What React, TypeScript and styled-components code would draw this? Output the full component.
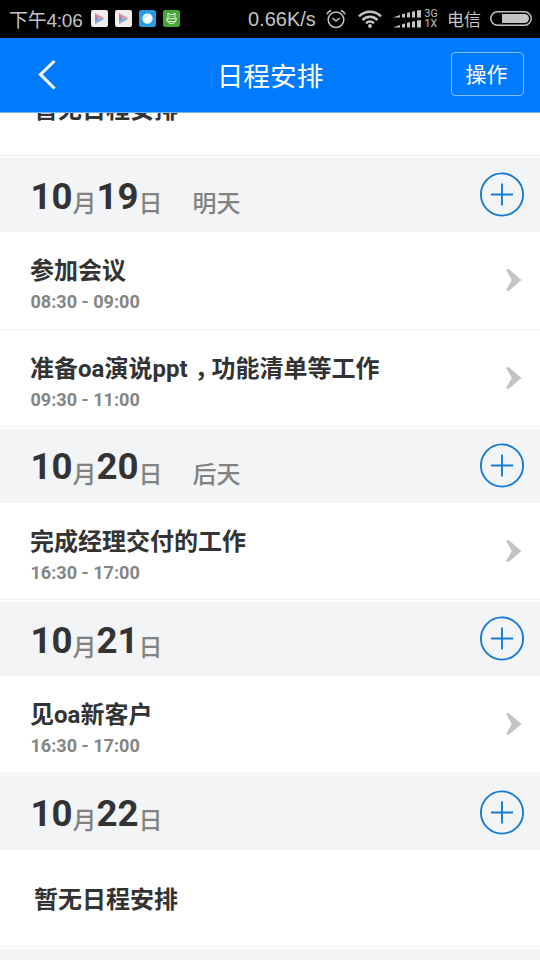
import React from "react";
import styled, { createGlobalStyle } from "styled-components";

const GlobalStyle = createGlobalStyle`
  html, body { margin: 0; height: 100%; overflow: hidden; background: #fff; }
  *, *::before, *::after { box-sizing: border-box; }
  body { font-family: Roboto, "Noto Sans CJK SC", sans-serif; color: #333; }
  svg { display: block; flex: none; }
`;

const Screen = styled.div`
  display: flex;
  flex-direction: column;
  width: 540px;
  height: 960px;
  overflow: hidden;
  background: #fff;
`;

const StatusBar = styled.div`
  flex: none;
  display: flex;
  align-items: center;
  justify-content: space-between;
  height: 38px;
  padding: 0 8px 1px 9px;
  background: #000;
  color: #c4c4c4;
  font-size: 19px;
  line-height: 35px;
`;

const StatusGroup = styled.div`
  display: flex;
  align-items: center;
`;

const Clock = styled.span`
  width: 82px;
  padding-top: 3px;
  white-space: nowrap;
  font-size: 19px;
  font-family: "Liberation Sans", "Noto Sans CJK SC", sans-serif;
  letter-spacing: -0.25px;
`;

const AppIcons = styled.div`
  display: flex;
  gap: 7px;
`;

const Speed = styled.span`
  width: 78px;
  padding-top: 2px;
  font-family: "Liberation Sans", sans-serif;
  font-size: 20px;
  white-space: nowrap;
`;

const NetworkType = styled.div`
  display: flex;
  flex-direction: column;
  width: 26.5px;
  padding-left: 4px;
  font-size: 10.5px;
  line-height: 10px;
`;

const Carrier = styled.span`
  width: 43px;
  padding-top: 3px;
  font-size: 17px;
  white-space: nowrap;
`;

const Header = styled.header`
  flex: none;
  display: grid;
  grid-template-columns: 100px 1fr 100px;
  align-items: center;
  height: 75px;
  padding-right: 16px;
  border-bottom: 1px solid #72b4fb;
  background: #007aff;
  color: #fff;
`;

const BackButton = styled.button`
  display: flex;
  width: 60px;
  padding: 0 0 1px 38px;
  border: 0;
  background: none;
`;

const Title = styled.h1`
  margin: 0;
  padding: 3px 0 0 16px;
  text-align: center;
  font-size: 26.7px;
  font-weight: 400;
  line-height: 36px;
`;

const ActionButton = styled.button`
  justify-self: end;
  width: 73px;
  height: 44px;
  margin-top: -2px;
  padding: 2px 2px 0 0;
  border: 1px solid #80bcff;
  border-radius: 4px;
  background: none;
  color: #fff;
  font: 400 21px/40px Roboto, "Noto Sans CJK SC", sans-serif;
`;

const List = styled.main`
  flex: 1;
  min-height: 0;
  overflow: hidden;
`;

const Scrolled = styled.div`
  margin-top: -54.2px;
`;

const DateBar = styled.div`
  display: flex;
  align-items: flex-start;
  justify-content: space-between;
  height: 74.3px;
  margin-top: 1.5px;
  padding: 14.5px 16px 0 30.5px;
  background: #f2f4f6;
`;

const DateText = styled.div`
  display: flex;
  align-items: flex-start;
  white-space: nowrap;
`;

const Digits = styled.span`
  width: 42px;
  padding-top: 2.3px;
  font-size: 36.6px;
  font-weight: 700;
  line-height: 44px;
`;

const Unit = styled.span`
  width: 24px;
  padding-top: 13.4px;
  color: #828282;
  font-size: 24px;
  font-weight: 500;
  line-height: 36px;
`;

const Relative = styled(Unit)`
  width: auto;
  margin-left: 30px;
`;

const AddButton = styled.button`
  display: flex;
  margin: 0;
  padding: 0;
  border: 0;
  background: none;
`;

const Item = styled.div`
  display: flex;
  align-items: center;
  justify-content: space-between;
  height: 97.5px;
  padding: 0 18px 0 30px;
  border-bottom: 1px solid #ededef;
`;

const ItemText = styled.div`
  padding-top: 9px;
`;

const ItemTitle = styled.div`
  font-size: 24px;
  font-weight: 700;
  line-height: 35px;
  white-space: nowrap;
`;

const Comma = styled.span`
  display: inline-block;
  width: 24px;
  text-indent: 7px;
`;

const ItemTime = styled.div`
  padding-left: 0.4px;
  color: #858585;
  font-size: 18.1px;
  font-weight: 700;
  line-height: 26px;
`;

const EmptyItem = styled(Item)`
  padding-left: 34px;
  padding-top: 6px;
`;

const PlayIcon = () => (
  <svg width="17" height="17" viewBox="0 0 17 17">
    <rect width="17" height="17" rx="2" fill="#f1eeee" />
    <path d="M4 3v11l4-5.5z" fill="#a884c7" />
    <path d="M4 3l10 5.5H8z" fill="#f08b86" />
    <path d="M4 14l10-5.5H8z" fill="#68b5dd" />
  </svg>
);

const BallIcon = () => (
  <svg width="17" height="17" viewBox="0 0 17 17">
    <rect width="17" height="17" rx="2.5" fill="#279be0" />
    <circle cx="8.5" cy="8.5" r="5.2" fill="#d9f0fc" />
    <path d="M4.5 10.5L11.5 5a5 5 0 0 1-7 7z" fill="#fff" />
  </svg>
);

const CatIcon = () => (
  <svg width="17" height="17" viewBox="0 0 17 17" fill="none" stroke="#e4f5dd" strokeWidth="1">
    <rect width="17" height="17" rx="2.5" fill="#45a735" stroke="none" />
    <path d="M5 8.5V3l2 1.5h3L12 3v5.5M3 8.8h11M3.8 9c.2 6.2 9.2 6.2 9.4 0M4.5 11.5h8" />
    <path d="M6.5 6.5h.8M9.7 6.5h.8" />
  </svg>
);

const AlarmIcon = () => (
  <svg width="20" height="20" viewBox="0 0 20 20" fill="none" stroke="#c4c4c4" strokeWidth="1.5">
    <circle cx="10" cy="10.8" r="7.8" />
    <path d="M6.5 9l3.5 3 3.7-3M.8 5.2C1.7 3.3 3.2 1.9 5.2 1.2M19.2 5.2C18.3 3.3 16.8 1.9 14.8 1.2" />
  </svg>
);

const WifiIcon = () => (
  <svg width="24" height="18" viewBox="0 0 24 18" fill="none" stroke="#c4c4c4" strokeWidth="2.5">
    <path d="M1 6.3c6.5-6 15.5-6 22 0M4.5 10c4.5-4.2 10.5-4.2 15 0M8 13.3c2.5-2.2 5.5-2.2 8 0" />
    <circle cx="12" cy="16" r="1.9" fill="#c4c4c4" stroke="none" />
  </svg>
);

const SignalIcon = () => (
  <svg width="28" height="18" viewBox="0 0 28 18" fill="#c4c4c4">
    {[0, 10].map((y) => (
      <g key={y} transform={`translate(0 ${y})`}>
        <path d="M0 7.5L7 5v2.5zM9 4.2l3-.8v4.1H9zM14 2.9l3-.8v5.4h-3zM19 1.7l3-.7v6.5h-3zM24 .5l4-.5v7.5h-4z" />
      </g>
    ))}
  </svg>
);

const BatteryIcon = () => (
  <svg width="42" height="15" viewBox="0 0 42 15">
    <rect x=".8" y=".8" width="40.4" height="13.4" rx="6.7" fill="none" stroke="#c4c4c4" strokeWidth="1.5" />
    <path d="M12 3h22.5a4.5 4.5 0 0 1 0 9H12z" fill="#c4c4c4" />
  </svg>
);

const BackIcon = () => (
  <svg width="19" height="31" viewBox="0 0 19 31" fill="none" stroke="#fff" strokeWidth="3">
    <path d="M16.5 2L2.5 15.5l14 14" />
  </svg>
);

const PlusCircle = () => (
  <svg width="44" height="45" viewBox="0 0 44 45" fill="none" stroke="#147cd4" strokeWidth="1.9">
    <circle cx="22" cy="22.5" r="21.1" />
    <path d="M11 22.5h22M22 11.5v22" />
  </svg>
);

const Chevron = () => (
  <svg width="17" height="24" viewBox="0 0 17 24">
    <path d="M1.2 2.2Q2 .3 4.2 1.500L16.500 12L4.2 22.500Q2 23.700 1.2 21.800L6.800 12z" fill="#c3c3c3" />
  </svg>
);

interface Entry {
  title: string;
  time: string;
}

interface Day {
  day: string;
  relative?: string;
  entries: Entry[];
}

const days: Day[] = [
  {
    day: "19",
    relative: "明天",
    entries: [
      { title: "参加会议", time: "08:30 - 09:00" },
      { title: "准备oa演说ppt，功能清单等工作", time: "09:30 - 11:00" },
    ],
  },
  { day: "20", relative: "后天", entries: [{ title: "完成经理交付的工作", time: "16:30 - 17:00" }] },
  { day: "21", entries: [{ title: "见oa新客户", time: "16:30 - 17:00" }] },
  { day: "22", entries: [] },
];

const NoEntries = () => (
  <EmptyItem>
    <ItemTitle>暂无日程安排</ItemTitle>
  </EmptyItem>
);

const EntryTitle = ({ text }: { text: string }) => (
  <ItemTitle>
    {text.split("，").map((part, i) => (
      <React.Fragment key={i}>
        {i > 0 && <Comma>，</Comma>}
        {part}
      </React.Fragment>
    ))}
  </ItemTitle>
);

const DaySection = ({ day, relative, entries }: Day) => (
  <section>
    <DateBar>
      <DateText>
        <Digits>10</Digits>
        <Unit>月</Unit>
        <Digits>{day}</Digits>
        <Unit>日</Unit>
        {relative && <Relative>{relative}</Relative>}
      </DateText>
      <AddButton aria-label="新增">
        <PlusCircle />
      </AddButton>
    </DateBar>
    {entries.length === 0 && <NoEntries />}
    {entries.map((entry) => (
      <Item key={entry.title}>
        <ItemText>
          <EntryTitle text={entry.title} />
          <ItemTime>{entry.time}</ItemTime>
        </ItemText>
        <Chevron />
      </Item>
    ))}
  </section>
);

const StatusRight = styled(StatusGroup)`
  & > svg:nth-of-type(1) { margin-right: 11.5px; }
  & > svg:nth-of-type(2) { margin-right: 11px; }
`;

export default function App() {
  return (
    <Screen>
      <GlobalStyle />
      <StatusBar>
        <StatusGroup>
          <Clock>下午4:06</Clock>
          <AppIcons>
            <PlayIcon />
            <PlayIcon />
            <BallIcon />
            <CatIcon />
          </AppIcons>
        </StatusGroup>
        <StatusRight>
          <Speed>0.66K/s</Speed>
          <AlarmIcon />
          <WifiIcon />
          <SignalIcon />
          <NetworkType>
            <span>3G</span>
            <span>1X</span>
          </NetworkType>
          <Carrier>电信</Carrier>
          <BatteryIcon />
        </StatusRight>
      </StatusBar>
      <Header>
        <BackButton aria-label="返回">
          <BackIcon />
        </BackButton>
        <Title>日程安排</Title>
        <ActionButton>操作</ActionButton>
      </Header>
      <List>
        <Scrolled>
          <NoEntries />
          {days.map((d) => (
            <DaySection key={d.day} {...d} />
          ))}
          <DateBar />
        </Scrolled>
      </List>
    </Screen>
  );
}
